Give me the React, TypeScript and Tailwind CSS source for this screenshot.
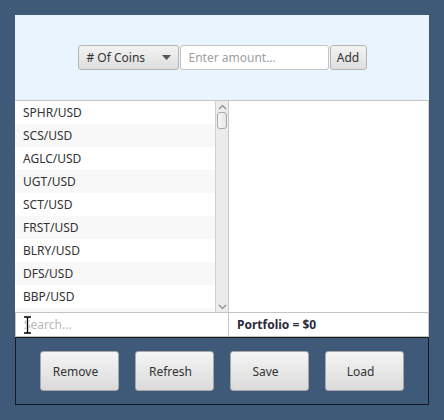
const coins = [
  'SPHR/USD',
  'SCS/USD',
  'AGLC/USD',
  'UGT/USD',
  'SCT/USD',
  'FRST/USD',
  'BLRY/USD',
  'DFS/USD',
  'BBP/USD',
  'CXT/USD',
];

const actions = ['Remove', 'Refresh', 'Save', 'Load'];

const font = { fontFamily: '"Noto Sans", "Open Sans", sans-serif' };

function Scrollbar() {
  return (
    <div className="w-[14px] h-full flex flex-col items-center bg-[#ececec] border-l border-[#d0d0d0] border-r border-r-[#c8c8c8]">
      <svg width="9" height="6" viewBox="0 0 9 6" className="mt-[3px]">
        <path d="M1 5 L4.5 1.5 L8 5" fill="none" stroke="#8a8a8a" strokeWidth="1.2" />
      </svg>
      <div className="mt-[2px] w-[10px] h-[17px] rounded-[3px] border border-[#a9a9a9] bg-gradient-to-r from-[#f7f7f7] to-[#e6e6e6]" />
      <div className="flex-1" />
      <svg width="9" height="6" viewBox="0 0 9 6" className="mb-[2px]">
        <path d="M1 1 L4.5 4.5 L8 1" fill="none" stroke="#8a8a8a" strokeWidth="1.2" />
      </svg>
    </div>
  );
}

export default function App() {
  return (
    <div className="w-[444px] h-[420px] bg-[#3e5a78] p-[15px] flex flex-col text-[12px] text-[#333]" style={font}>
      <div className="h-[85px] bg-[#e9f4fe] flex items-center justify-center">
        <div className="flex items-center gap-[1px]">
          <div className="w-[101px] h-[25px] rounded-[3px] border border-[#b4b4b4] bg-gradient-to-b from-[#f3f3f3] to-[#dedede] flex items-center justify-between pl-[8px] pr-[7px]">
            <span>&#35; Of Coins</span>
            <svg width="9" height="5" viewBox="0 0 9 5">
              <path d="M0 0 H9 L4.5 5 Z" fill="#555" />
            </svg>
          </div>
          <div className="w-[149px] h-[25px] rounded-[3px] border border-[#c4c4c4] bg-white flex items-center pl-[8px] text-[#a0a0a0]">
            Enter amount...
          </div>
          <div className="w-[37px] h-[25px] rounded-[3px] border border-[#b4b4b4] bg-gradient-to-b from-[#f3f3f3] to-[#dedede] flex items-center justify-center">
            Add
          </div>
        </div>
      </div>

      <div className="h-[212px] flex border-t border-[#c4c4c4]">
        <div className="w-[214px] flex bg-white overflow-hidden">
          <div className="flex-1 flex flex-col overflow-hidden">
            {coins.map((c, i) => (
              <div
                key={c}
                className={`h-[23px] shrink-0 flex items-center pl-[8px] ${i % 2 === 1 ? 'bg-[#f8f8f8]' : 'bg-white'}`}
              >
                {c}
              </div>
            ))}
          </div>
          <Scrollbar />
        </div>
        <div className="flex-1 bg-white border-r border-[#d8d8d8]" />
      </div>

      <div className="h-[25px] flex">
        <div className="relative w-[214px] bg-white border border-[#c4c4c4] flex items-center pl-[8px] text-[#b8b8b8]">
          Search...
          <svg width="9" height="18" viewBox="0 0 9 18" className="absolute left-[7px] top-[3px]">
            <path d="M1 1 H8 M4.5 1 V17 M1 17 H8" fill="none" stroke="#fff" strokeWidth="3" />
            <path d="M1 1 H8 M4.5 1 V17 M1 17 H8" fill="none" stroke="#000" strokeWidth="1.3" />
          </svg>
        </div>
        <div className="flex-1 bg-white border border-l-0 border-[#c4c4c4] flex items-center pl-[8px] font-bold text-[#2a2a3a]">
          Portfolio = $0
        </div>
      </div>

      <div className="h-[68px] border border-[#151a20] flex items-center justify-center gap-[16px]">
        {actions.map((a) => (
          <div
            key={a}
            className="w-[79px] h-[40px] rounded-[3px] border border-[#a7a7a7] bg-gradient-to-b from-[#f5f5f5] to-[#dadada] flex items-center justify-center pr-[8px] pt-[1px]"
          >
            {a}
          </div>
        ))}
      </div>
    </div>
  );
}
